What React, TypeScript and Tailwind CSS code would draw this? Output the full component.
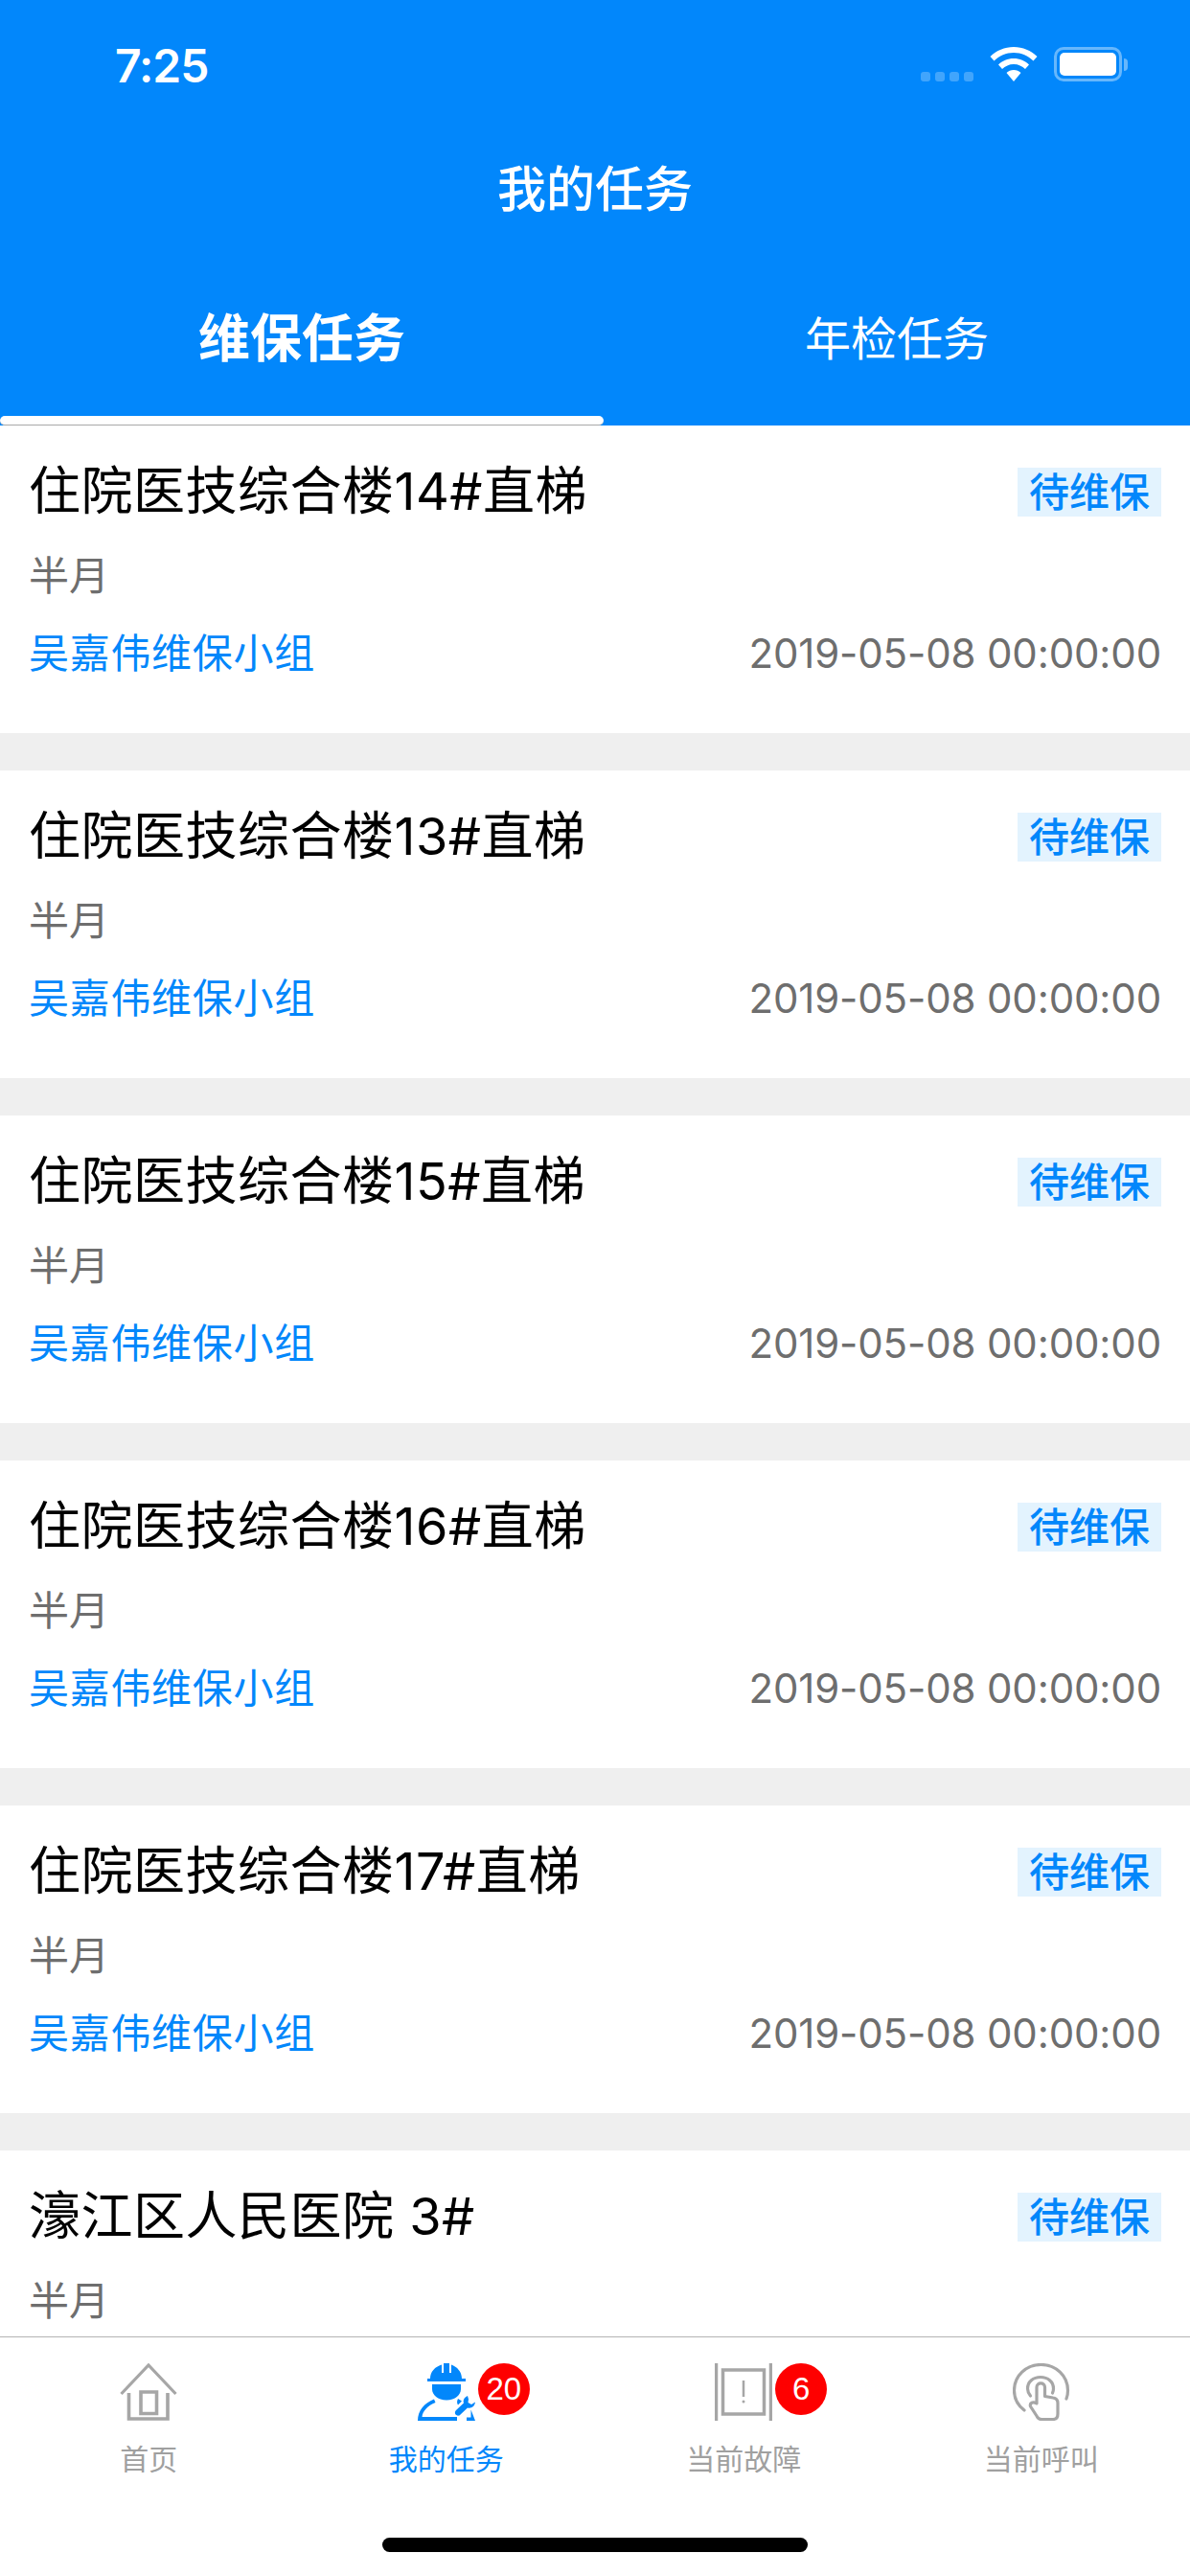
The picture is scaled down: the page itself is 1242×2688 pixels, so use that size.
import React from 'react';

interface Task {
  name: string;
  partial?: boolean;
}

const tasks: Task[] = [
  { name: '住院医技综合楼14#直梯' },
  { name: '住院医技综合楼13#直梯' },
  { name: '住院医技综合楼15#直梯' },
  { name: '住院医技综合楼16#直梯' },
  { name: '住院医技综合楼17#直梯' },
  { name: '濠江区人民医院 3#', partial: true }
];

const StatusIcons = () => (
  <div className="flex items-end">
    <div className="flex gap-[5px]">
      {[0, 1, 2, 3].map((i) => (
        <div key={i} className="w-[10px] h-[10px] rounded-[3px] bg-white/25" />
      ))}
    </div>
    <svg className="ml-[17px]" width="50" height="36" viewBox="0 0 50 36">
      <path d="M25 0C15.500 0 7 3.700 0.500 10L4.500 14.500C9.800 9.300 17 6 25 6S40.200 9.300 45.500 14.500L49.500 10C43 3.700 34.500 0 25 0Z" fill="#fff" />
      <path d="M25 12C18.700 12 13 14.500 9 18.500L13 23C16 20 20.300 18 25 18S34 20 37 23L41 18.500C37 14.500 31.300 12 25 12Z" fill="#fff" />
      <path d="M25 24C22 24 19.500 25.200 17.500 27L25 36L32.500 27C30.500 25.200 28 24 25 24Z" fill="#fff" />
    </svg>
    <div className="ml-[17px] w-[71px] h-[36px] rounded-[10px] border-[3px] border-white/40 p-[3px]">
      <div className="w-full h-full rounded-[5px] bg-white" />
    </div>
    <div className="ml-[2px] mb-[11px] w-[4px] h-[13px] rounded-r-[4px] bg-white/40" />
  </div>
);

const HomeIcon = () => (
  <svg width="60" height="60" viewBox="0 0 60 60" fill="none" stroke="#a6a6a6">
    <path d="M1.500 32L30 2L58.500 32" strokeWidth="3.200" />
    <path d="M9.500 31V58H50V31" strokeWidth="3.600" />
    <path d="M22 30H38.500V52.500H22Z" strokeWidth="3.600" />
  </svg>
);

const WorkerIcon = () => (
  <svg width="60" height="60" viewBox="0 0 60 60" fill="#0287fb">
    <path d="M13 16C13 9 18 3.500 25 1.500V10H27V0H33V10H35V1.500C41 3.500 46 9 46 16H50V19H10V16Z" />
    <path d="M15 22H45V27C45 33 39 38.500 30 38.500C21 38.500 15 33 15 27Z" />
    <path d="M0 60C0 49.500 7 41.500 17 37.500L18.500 41C10.500 44 5 50 4.500 56H41V60Z" />
    <path d="M42 37L46 39.500L42 43.500C41 42 40.500 40 42 37Z" />
    <path d="M52 34C48.500 35.500 47 38.500 48 41.500L40 49C37.500 51.500 39.500 55.500 43.500 54.500L52 46.500C56 47.500 59.500 45 60 40.500L56 43L52.500 41L53 37.500Z" />
    <path d="M55.500 48.500L60 60H51V56.500H55.500Z" />
  </svg>
);

const FaultIcon = () => (
  <svg width="60" height="60" viewBox="0 0 60 60" fill="none" stroke="#a6a6a6">
    <path d="M1.500 0V60M58.500 0V60" strokeWidth="3.500" />
    <rect x="8.500" y="7" width="43" height="46" strokeWidth="3.500" />
    <path d="M30 18V35" strokeWidth="2.500" />
    <circle cx="30" cy="40" r="1.500" fill="#a6a6a6" stroke="none" />
  </svg>
);

const CallIcon = () => (
  <svg width="60" height="60" viewBox="0 0 60 60" fill="none" stroke="#a6a6a6" strokeWidth="3.200" strokeLinecap="round" strokeLinejoin="round">
    <path d="M12 49C5.500 44 1.500 36.500 1.500 28.500C1.500 13 14 1.500 29.500 1.500S57.500 13 57.500 28.500C57.500 31.500 57 34.500 56 37" />
    <path d="M18.500 34C16.500 31.500 15.500 29 15.500 26.500C15.500 19 21.500 14.500 29 14.500S42.500 19 42.500 26.500C42.500 28 42.200 29.500 41.500 31" />
    <path d="M25 42V25C25 19.500 33.500 19.500 33.500 25V34.500L42 36C45.500 36.500 47 38.500 47 41.500V53C47 56.500 45 58.500 42 58.500H30C27.500 58.500 26 57.500 25 55L18.500 45C17.500 41.500 21 39.500 25 42Z" />
  </svg>
);

const TabItem = ({ icon, label, active, badge }: { icon: React.ReactNode; label: string; active?: boolean; badge?: string }) => (
  <div className="flex flex-col items-center">
    <div className="relative w-[60px] h-[60px]">
      {icon}
      {badge && (
        <span className="absolute left-[63px] top-0 w-[54px] h-[54px] rounded-full bg-[#fe0000] text-white text-[33px] leading-[54px] text-center font-['Liberation_Sans',sans-serif]">
          {badge}
        </span>
      )}
    </div>
    <span className={`mt-[20px] text-[30px] leading-[40px] ${active ? 'text-[#0287fb]' : 'text-[#a0a0a0]'}`}>
      {label}
    </span>
  </div>
);

export default function App() {
  return (
    <div className="w-[1242px] h-[2688px] flex flex-col overflow-hidden bg-[#efefef] font-['Inter','Noto_Sans_CJK_SC',sans-serif]">
      <div className="h-[444px] bg-[#0287fb] shrink-0">
        <div className="flex justify-between items-start pt-[49px] pl-[120px] pr-[65px] h-[85px]">
          <span className="mt-[2px] text-white text-[48px] leading-[36px] font-semibold tracking-[-1px]">7:25</span>
          <StatusIcons />
        </div>
        <div className="mt-[83px] h-[60px] text-center text-white text-[51px] leading-[60px] font-medium">我的任务</div>
        <div className="mt-[88px] grid grid-cols-[630px_612px] h-[76px] items-center text-center text-white">
          <span className="font-bold text-[54px] leading-[76px]">维保任务</span>
          <span className="text-[48px] leading-[76px]">年检任务</span>
        </div>
        <div className="mt-[42px] w-[630px] h-[10px] bg-white rounded-full border-b border-[#a9a9a9]" />
      </div>

      <div className="flex-1 flex flex-col gap-[39px] overflow-hidden">
        {tasks.map((task) => (
          <div key={task.name} className="bg-white shrink-0 h-[321px] pt-[31px] px-[30px]">
            <div className="flex justify-between items-center h-[76px]">
              <span className="text-black text-[54px] leading-[76px] tracking-[0.5px]">{task.name}</span>
              <span className="w-[150px] h-[51px] bg-[#e3f3fe] text-[#0287fb] text-[42px] leading-[51px] text-center font-medium">待维保</span>
            </div>
            <div className="mt-[25px] h-[50px] text-[#6e6e6e] text-[42px] leading-[50px]">半月</div>
            {!task.partial && (
              <div className="mt-[26px] flex justify-between h-[60px] leading-[60px] text-[42px]">
                <span className="text-[#0287fb] tracking-[0.7px]">吴嘉伟维保小组</span>
                <span className="text-[#6e6e6e] tracking-[-0.15px]">2019-05-08 00:00:00</span>
              </div>
            )}
          </div>
        ))}
      </div>

      <div className="h-[250px] shrink-0 bg-white border-t border-[#b3b3b3] pt-[27px] flex flex-col">
        <div className="grid grid-cols-4">
          <TabItem icon={<HomeIcon />} label="首页" />
          <TabItem icon={<WorkerIcon />} label="我的任务" active badge="20" />
          <TabItem icon={<FaultIcon />} label="当前故障" badge="6" />
          <TabItem icon={<CallIcon />} label="当前呼叫" />
        </div>
        <div className="mt-[62px] mx-auto w-[444px] h-[15px] rounded-full bg-black" />
      </div>
    </div>
  );
}
